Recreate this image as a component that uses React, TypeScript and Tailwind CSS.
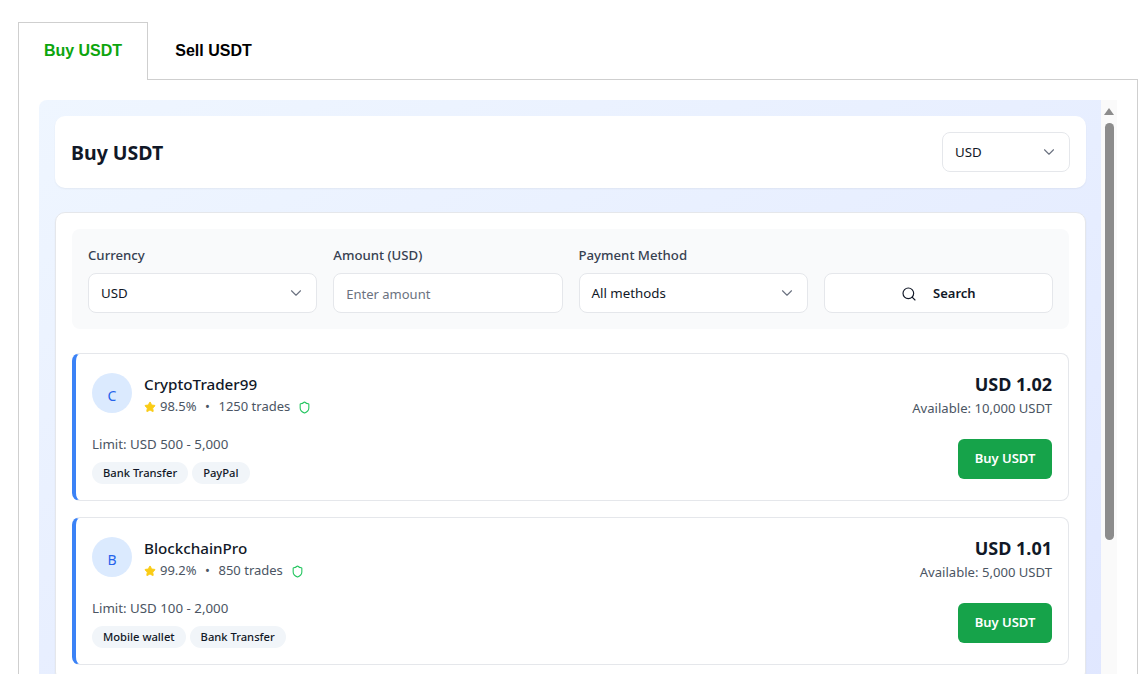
import { ChevronDown, Search, Shield, Star } from "lucide-react";

const font = "font-['Noto_Sans','Open_Sans',sans-serif]";

function Select({ value, className = "" }: { value: string; className?: string }) {
  return (
    <div className={`flex h-10 items-center justify-between rounded-lg border border-[#e5e7eb] bg-white pl-3 pr-[11px] text-[13.3px] text-[#111827] ${className}`}>
      <span className="pt-px">{value}</span>
      <ChevronDown className="h-[18px] w-[18px] text-[#6b7280]" strokeWidth={1.5} />
    </div>
  );
}

function Field({ label, children }: { label: string; children: React.ReactNode }) {
  return (
    <div className="flex flex-col gap-2">
      <label className="h-5 text-[13.2px] font-medium leading-5 text-[#374151]">{label}</label>
      {children}
    </div>
  );
}

function Offer(props: {
  initial: string;
  name: string;
  rating: string;
  trades: string;
  price: string;
  available: string;
  limit: string;
  methods: string[];
}) {
  return (
    <div className="flex h-[148px] shrink-0 justify-between rounded-lg border border-l-4 border-[#e5e7eb] border-l-[#3b82f6] bg-white py-[19px] pl-4 pr-4">
      <div className="flex flex-col">
        <div className="flex items-start gap-3">
          <div className="flex h-10 w-10 items-center justify-center rounded-full bg-[#dbeafe] pt-1 text-[14px] text-[#2563eb]">
            {props.initial}
          </div>
          <div className="flex flex-col">
            <div className="mb-[2px] text-[15.2px] font-medium leading-[22px] text-[#111827]">{props.name}</div>
            <div className="flex h-5 items-center text-[13px] text-[#4b5563]">
              <Star className="mr-1 h-3 w-3 fill-[#facc15] text-[#facc15]" />
              <span>{props.rating}</span>
              <span className="mx-[8.5px]">•</span>
              <span>{props.trades}</span>
              <Shield className="ml-2 h-[13px] w-[13px] text-[#22c55e]" strokeWidth={2} />
            </div>
          </div>
        </div>
        <div className="mt-[17px] text-[13.3px] leading-5 text-[#4b5563]">{props.limit}</div>
        <div className="mt-2 flex gap-1">
          {props.methods.map((m) => (
            <span key={m} className="flex h-[22px] items-center rounded-full bg-[#f1f5f9] px-[11px] text-[11.2px] font-medium text-[#111827]">
              {m}
            </span>
          ))}
        </div>
      </div>
      <div className="flex flex-col items-end">
        <div className="text-[18px] font-bold leading-[22px] text-[#111827]">{props.price}</div>
        <div className="mt-[3px] text-[13.1px] leading-5 text-[#4b5563]">{props.available}</div>
        <button className="mb-[2px] mt-auto h-10 w-[94px] rounded-md bg-[#16a34a] text-[13px] font-semibold text-white">Buy USDT</button>
      </div>
    </div>
  );
}

export default function App() {
  return (
    <div className={`h-[674px] overflow-hidden bg-white pl-[18px] pt-[22px] ${font}`}>
      <div className="flex h-[58px] font-['Liberation_Sans',sans-serif] text-[16px] font-bold">
        <div className="z-10 flex h-[58px] w-[130px] items-center justify-center border border-b-0 border-[#cfcfcf] bg-white pb-[2px] text-[#0da50d]">
          Buy USDT
        </div>
        <div className="flex flex-1 items-stretch">
          <div className="flex w-[131px] items-center justify-center border-b border-[#cfcfcf] text-black">Sell USDT</div>
          <div className="mr-px flex-1 border-b border-[#cfcfcf]" />
        </div>
      </div>
      <div className="mr-px -mt-px flex h-[620px] border border-t border-[#cfcfcf] pl-5 pr-[20px] pt-5">
        <div className="flex h-full min-w-0 flex-1 flex-col gap-6 overflow-hidden rounded-tl-lg bg-gradient-to-br from-[#eff6ff] to-[#e0e7ff] pl-4 pr-[15px] pt-4">
          <div className="flex h-[72px] shrink-0 items-center justify-between rounded-[10px] bg-white px-4 shadow-xs">
            <h1 className="pt-px text-[19.5px] font-bold text-[#111827]">Buy USDT</h1>
            <Select value="USD" className="w-[128px]" />
          </div>
          <div className="flex shrink-0 flex-col gap-6 rounded-[10px] border border-[#e5e7eb] bg-white p-4 shadow-xs">
            <div className="grid grid-cols-4 gap-4 rounded-lg bg-[#f9fafb] p-4">
              <Field label="Currency">
                <Select value="USD" />
              </Field>
              <Field label="Amount (USD)">
                <div className="flex h-10 items-center rounded-lg border border-[#e5e7eb] bg-white px-3 pt-1 text-[13px] text-[#6b7280]">Enter amount</div>
              </Field>
              <Field label="Payment Method">
                <Select value="All methods" />
              </Field>
              <div className="flex flex-col justify-end">
                <button className="flex h-10 items-center justify-center gap-4 rounded-lg border border-[#e5e7eb] bg-white pt-px text-[13px] font-semibold text-[#111827]">
                  <Search className="h-4 w-4" strokeWidth={1.75} />
                  Search
                </button>
              </div>
            </div>
            <div className="flex flex-col gap-4">
              <Offer initial="C" name="CryptoTrader99" rating="98.5%" trades="1250 trades" price="USD 1.02" available="Available: 10,000 USDT" limit="Limit: USD 500 - 5,000" methods={["Bank Transfer", "PayPal"]} />
              <Offer initial="B" name="BlockchainPro" rating="99.2%" trades="850 trades" price="USD 1.01" available="Available: 5,000 USDT" limit="Limit: USD 100 - 2,000" methods={["Mobile wallet", "Bank Transfer"]} />
            </div>
          </div>
        </div>
        <div className="flex h-full w-4 shrink-0 flex-col items-center bg-[#fafafa] pt-2">
          <div className="h-0 w-0 border-x-[5px] border-b-[7px] border-x-transparent border-b-[#8c8c8c]" />
          <div className="mt-2 h-[417px] w-[9px] rounded-full bg-[#8c8c8c]" />
        </div>
      </div>
    </div>
  );
}
